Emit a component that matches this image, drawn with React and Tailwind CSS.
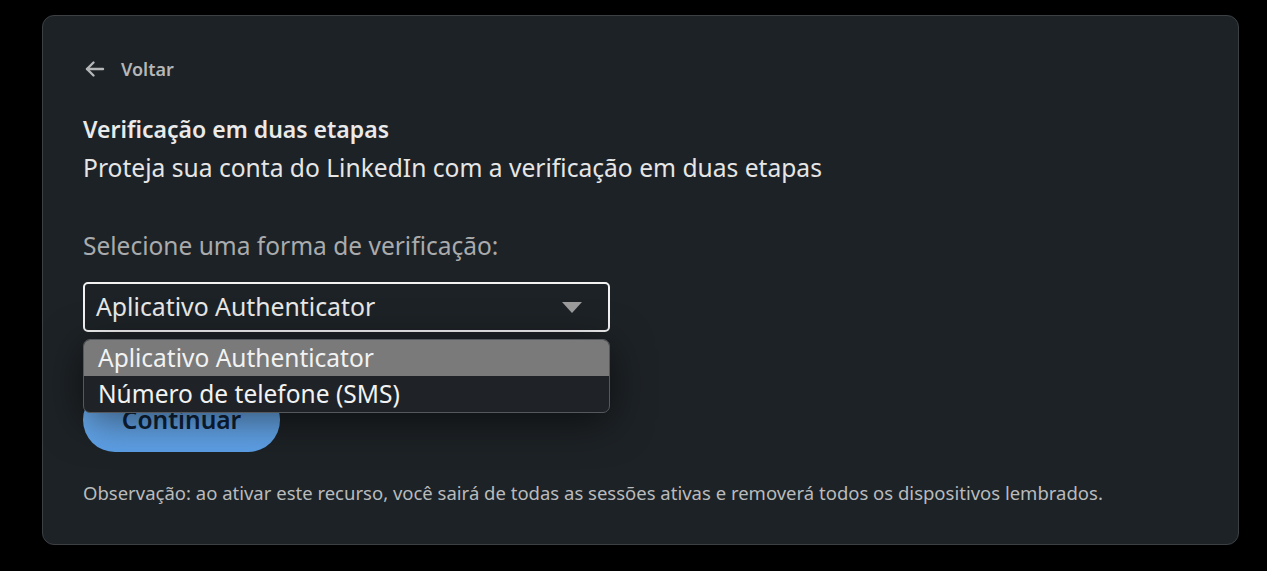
import React, { useState } from "react";

const options = ["Aplicativo Authenticator", "Número de telefone (SMS)"];

const App = () => {
  const [selected] = useState(options[0]);

  return (
    <div className="min-h-[571px] w-[1267px] bg-black pt-[15px] pl-[42px] font-['Noto_Sans',sans-serif]">
      <div className="w-[1197px] h-[530px] rounded-xl border border-[#3d4043] bg-[#1d2226] pl-[40px] pt-[41px]">
        {/* Back */}
        <button className="flex items-center h-6 text-[#b4b6b8]">
          <svg width="24" height="24" viewBox="0 0 24 24" fill="none" stroke="currentColor" strokeWidth="2.4" strokeLinecap="round" strokeLinejoin="round">
            <path d="M20 12H4" />
            <path d="M10.5 5.5L4 12l6.5 6.5" />
          </svg>
          <span className="ml-[14px] text-[18px] font-semibold">Voltar</span>
        </button>

        <h3 className="mt-[33px] text-[23px] leading-[30px] font-semibold text-[#eaeaea]">Verificação em duas etapas</h3>
        <p className="mt-[9px] text-[24.6px] leading-[30px] text-[#e6e6e6]">
          Proteja sua conta do LinkedIn com a verificação em duas etapas
        </p>

        <p className="mt-[48px] text-[24.5px] leading-[30px] text-[#a9abad]">Selecione uma forma de verificação:</p>

        <div className="relative mt-[21px] w-[527px]">
          <div className="flex items-center justify-between h-[50px] rounded-[5px] border-2 border-[#f2f2f2] pl-[11px] pr-[26px] text-[24.8px] text-[#e8e8e8]">
            <span>{selected}</span>
            <svg width="20" height="11" viewBox="0 0 20 11">
              <path d="M0 0h20L10 11z" fill="#9c9c9c" />
            </svg>
          </div>

          <div className="absolute left-0 top-[57px] z-10 w-[527px] overflow-hidden rounded-[7px] border border-[#55585c] bg-[#1f2327] shadow-[0_8px_40px_rgba(0,0,0,0.55)]">
            {options.map((item, index) => (
              <div
                key={index}
                className={
                  index === 0
                    ? "h-[36px] flex items-center pl-[14px] text-[24.5px] text-[#f2f2f2] bg-[#7a7a7a]"
                    : "h-[36px] flex items-center pl-[14px] text-[24.5px] text-[#f2f2f2]"
                }
              >
                {item}
              </div>
            ))}
          </div>

          <button className="mt-[56px] w-[197px] h-[64px] rounded-full bg-gradient-to-t from-[#5c9fe6] to-[#74b6f7] text-[24.5px] font-semibold text-[#0e2238]">
            Continuar
          </button>
        </div>

        <p className="mt-[29px] text-[18.5px] leading-6 text-[#b9bbbd]">
          Observação: ao ativar este recurso, você sairá de todas as sessões ativas e removerá todos os dispositivos lembrados.
        </p>
      </div>
    </div>
  );
};

export default App;
